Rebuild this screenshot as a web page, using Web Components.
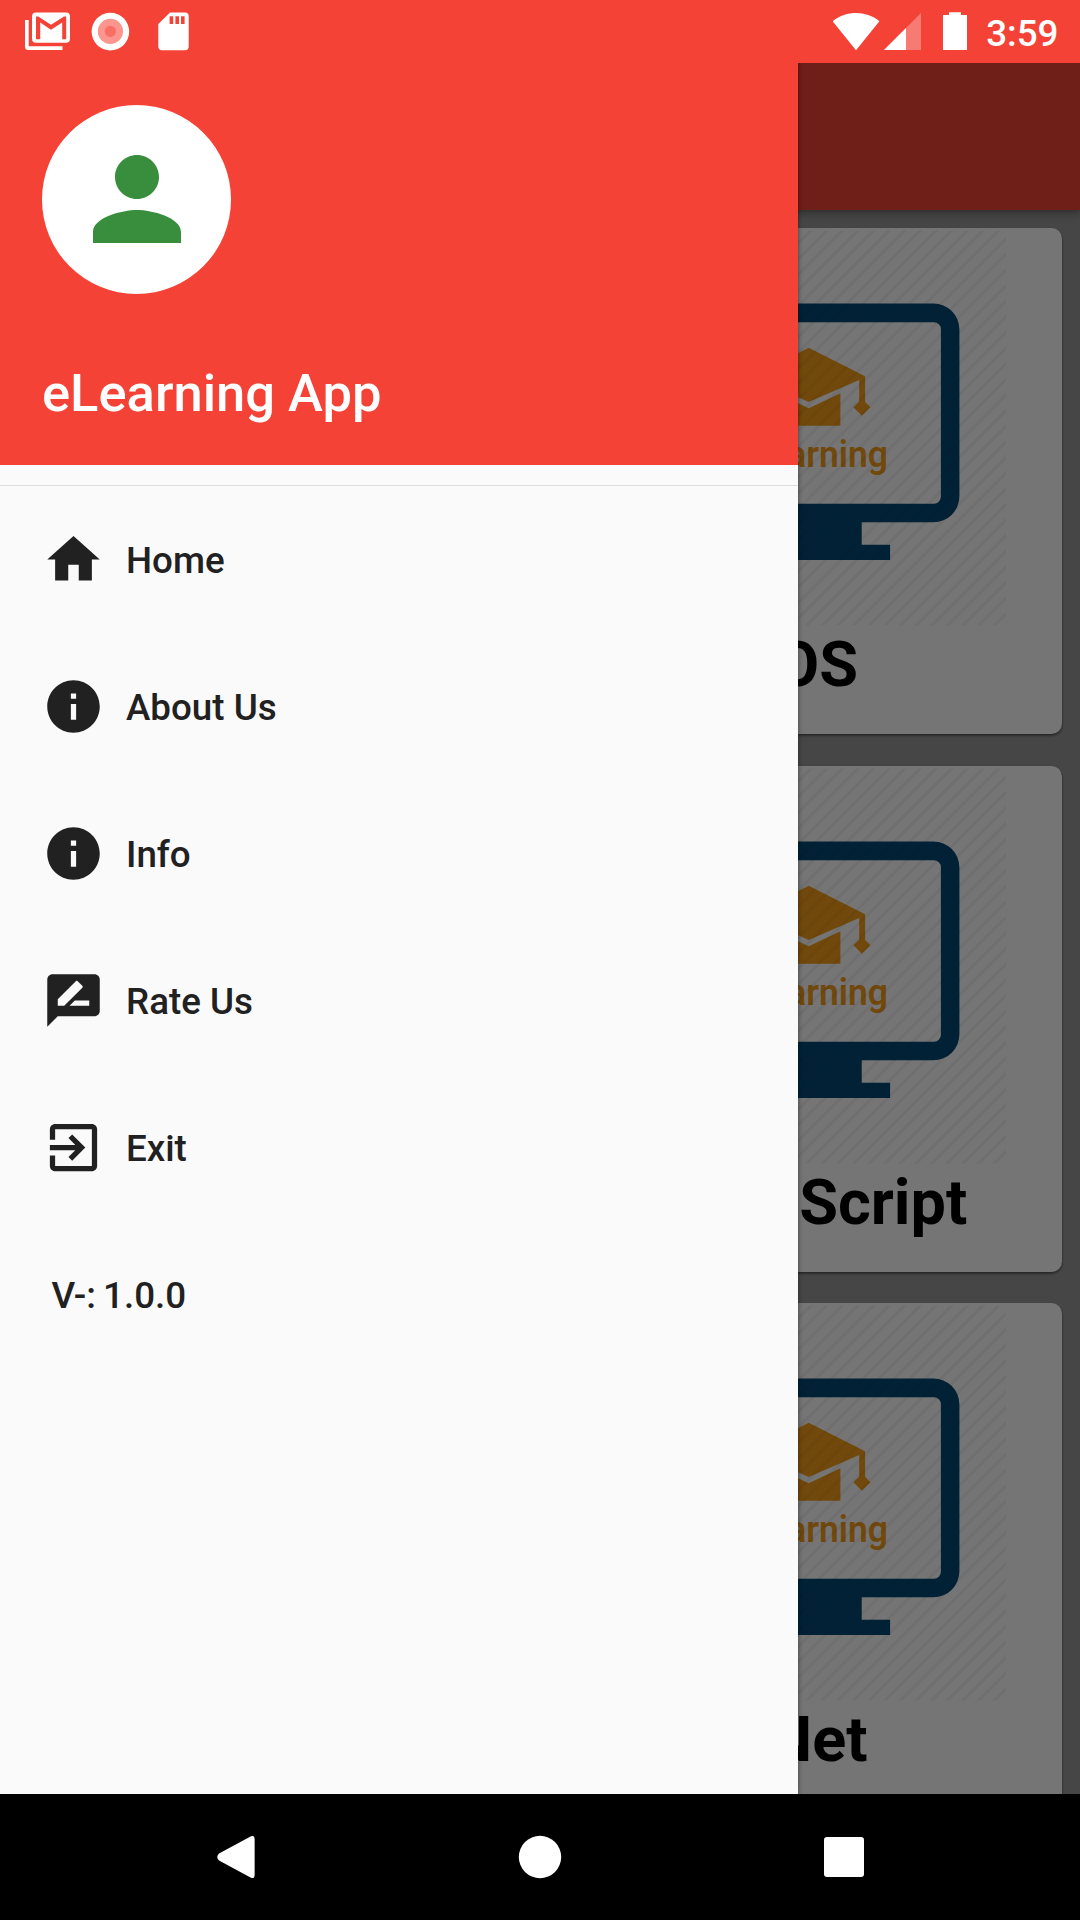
<!DOCTYPE html>
<html lang="en">
<head>
<meta charset="utf-8">
<title>eLearning App</title>
<style>
html,body{margin:0;padding:0}
body{width:1080px;height:1920px;overflow:hidden;font-family:Roboto,"Noto Sans",sans-serif;background:#000}
</style>
</head>
<body>
<phone-screen>
  <status-bar slot="status" time="3:59"></status-bar>
  <course-grid slot="page">
    <course-card>iOS</course-card>
    <course-card>Java Script</course-card>
    <course-card>.Net</course-card>
  </course-grid>
  <nav-drawer slot="drawer" heading="eLearning App">
    <drawer-item icon="home">Home</drawer-item>
    <drawer-item icon="info">About Us</drawer-item>
    <drawer-item icon="info">Info</drawer-item>
    <drawer-item icon="rate">Rate Us</drawer-item>
    <drawer-item icon="exit">Exit</drawer-item>
    <drawer-item>V-: 1.0.0</drawer-item>
  </nav-drawer>
  <system-nav slot="nav"></system-nav>
</phone-screen>
<script>
const define = (name, render) => customElements.define(name, class extends HTMLElement {
  constructor() { super(); this.attachShadow({ mode: 'open' }); }
  connectedCallback() { this.shadowRoot.innerHTML = render(this); }
});

define('phone-screen', () => `
<style>
:host{display:flex;flex-direction:column;width:1080px;height:1920px}
.stage{position:relative;flex:1;min-height:0;overflow:hidden;background:#999;display:flex;flex-direction:column}
.appbar{flex:none;height:147px;background:#f44336;box-shadow:0 5px 9px rgba(0,0,0,.2),0 2px 4px rgba(0,0,0,.15);z-index:1}
.scrim{position:absolute;inset:0;background:rgba(0,0,0,.54);z-index:2}
.drawer{position:absolute;top:0;bottom:0;left:0;width:798px;z-index:3;display:flex;box-shadow:0 0 5px rgba(0,0,0,.45)}
</style>
<slot name="status"></slot>
<div class="stage">
  <div class="appbar"></div>
  <slot name="page"></slot>
  <div class="scrim"></div>
  <div class="drawer"><slot name="drawer"></slot></div>
</div>
<slot name="nav"></slot>`);

define('status-bar', el => `
<style>
:host{display:flex;justify-content:space-between;height:63px;flex:none;background:#f44336;color:#fff;fill:#fff}
div{display:flex}
.l{padding-left:25px}.r{padding-right:21.5px}
svg{display:block;height:63px}
span{font-size:36.75px;font-weight:500;line-height:63px;margin-left:19px;padding-top:2px}
</style>
<div class="l">
<svg width="66" viewBox="25 0 66 63"><path d="M25 20h3.7v26.3H62.5V50H28.5a3.5 3.5 0 0 1-3.5-3.5z"/><path fill-rule="evenodd" d="M36 12.4h30a4 4 0 0 1 4 4v22.4a4 4 0 0 1-4 4H36a4 4 0 0 1-4-4V16.4a4 4 0 0 1 4-4zM36 39.2h4.2V22.5L51 29.8l11.2-7.3v16.7h4V16.4h-2.2L51 24.7 38.2 16.4H36z"/></svg>
<svg width="67" viewBox="91 0 67 63"><circle cx="110.4" cy="31.6" r="18.8"/><circle cx="110.4" cy="31.4" r="12.6" fill="#fb958d"/><circle cx="110.4" cy="31.3" r="5.6" fill="#f96e65"/></svg>
<svg width="31" viewBox="158 0 31 63"><path fill-rule="evenodd" d="M170 12.5h15a3.7 3.7 0 0 1 3.7 3.7v30.3a3.7 3.7 0 0 1-3.7 3.7h-23a3.7 3.7 0 0 1-3.7-3.7V24zM169.6 16.3v7.8h3.6v-7.8zM175.4 16.3v7.8h3.6v-7.8zM181 16.3v7.8h3.6v-7.8z"/></svg>
</div>
<div class="r">
<svg width="51" viewBox="833 0 51 63"><path d="M856 50.2 832.6 21.2C846 10.4 866 10.4 879.4 21.2z"/></svg>
<svg width="59" viewBox="884 0 59 63"><path opacity=".3" d="M921 13v37h-37z"/><path d="M906 28v22h-22z"/></svg>
<svg width="24" viewBox="943 0 24 63"><path d="M949 12.2h12v2.8h6v35h-24V15h6z"/></svg>
<span>${el.getAttribute('time')}</span>
</div>`);

define('course-grid', () => `
<style>
:host{display:flex;flex-direction:column;align-items:flex-end;gap:31.5px;padding:18.4px 18.4px 0 0}
</style><slot></slot>`);

let stripeId = 0;
define('course-card', () => {
  const id = 'stripe' + stripeId++;
  return `
<style>
:host{display:flex;flex-direction:column;align-items:center;flex:none;width:506px;height:506px;border-radius:10.5px;background:#fff;box-shadow:0 2px 3px rgba(0,0,0,.3),0 1px 2px rgba(0,0,0,.3)}
svg{display:block;flex:none}
p{margin:0;font-size:63px;font-weight:700;line-height:74px;color:#000;padding-top:2px;white-space:nowrap}
</style>
<svg width="398" height="398" viewBox="0 0 398 398">
<defs><pattern id="${id}" width="11.05" height="11.05" patternUnits="userSpaceOnUse" patternTransform="translate(-7.4 0) rotate(45)"><rect x="4.1" width="2.8" height="12" fill="#000" opacity=".055"/></pattern></defs>
<g transform="translate(-.6 .8)">
<path fill="#044a76" fill-rule="evenodd" d="M74 74.7H324a26 26 0 0 1 26 26V267.5a26 26 0 0 1-26 26H252.3V316H280.7V331.2H117.3V316H145.7V293.5H74a26 26 0 0 1-26-26V100.7a26 26 0 0 1 26-26zM74 93.4a7 7 0 0 0-7 7V268a7 7 0 0 0 7 7H324.5a7 7 0 0 0 7-7V100.4a7 7 0 0 0-7-7z"/>
<g fill="#f9a01b"><path d="M199.3 119 255.7 147.5V173l5.3 5.5-8.5 8.5-8.5-8.5 5.8-5.5V151.2L199.3 173.3 143 147.5z"/><path d="M168 164.5 199.3 179.5 231 164.5V197H168z"/>
<text x="199.5" y="238.600" font-size="37" font-weight="600" text-anchor="middle" textLength="158" lengthAdjust="spacingAndGlyphs">eLearning</text></g>
</g>
<rect x="2.500" y="2.500" width="393.500" height="395" fill="url(#${id})"/>
</svg>
<p><slot></slot></p>`;
});

define('nav-drawer', el => `
<style>
:host{display:flex;flex-direction:column;width:798px;background:#fafafa}
header{height:401.5px;box-sizing:border-box;padding:42px 42px 0;background:#f44336;color:#fff;flex:none}
.avatar{width:189px;height:189px;border-radius:50%;background:#fff;display:flex;align-items:center;justify-content:center}
.avatar svg{margin-bottom:2px}
h1{margin:69px 0 0;font-size:52.5px;font-weight:500;line-height:60px}
hr{margin:20px 0 0;border:0;height:1px;background:#dedede;flex:none}
</style>
<header>
<div class="avatar"><svg width="132" height="132" viewBox="0 0 24 24" fill="#388e3c"><path d="M12 12c2.21 0 4-1.79 4-4s-1.79-4-4-4-4 1.79-4 4 1.79 4 4 4zm0 2c-2.67 0-8 1.34-8 4v2h16v-2c0-2.66-5.33-4-8-4z"/></svg></div>
<h1>${el.getAttribute('heading')}</h1>
</header>
<hr>
<slot></slot>`);

const icons = {
  home: 'M10 20v-6h4v6h5v-8h3L12 3 2 12h3v8z',
  info: 'M12 2C6.48 2 2 6.48 2 12s4.48 10 10 10 10-4.48 10-10S17.52 2 12 2zm1 15h-2v-6h2v6zm0-8h-2V7h2v2z',
  rate: 'M20 2H4c-1.1 0-1.99.9-1.99 2L2 22l4-4h14c1.1 0 2-.9 2-2V4c0-1.1-.9-2-2-2zM6 14v-2.47l6.88-6.88c.2-.2.51-.2.71 0l1.77 1.77c.2.2.2.51 0 .71L8.47 14H6zm12 0h-7.5l2-2H18v2z',
  exit: 'M10.09 15.59L11.5 17l5-5-5-5-1.41 1.41L12.67 11H3v2h9.67l-2.58 2.59zM19 3H5c-1.11 0-2 .9-2 2v4h2V5h14v14H5v-4H3v4c0 1.1.89 2 2 2h14c1.1 0 2-.9 2-2V5c0-1.100-.9-2-2-2z'
};
define('drawer-item', el => {
  const icon = icons[el.getAttribute('icon')];
  return `
<style>
:host{display:flex;align-items:center;height:147px;flex:none;padding-left:${icon ? 42 : 51.5}px;gap:21px;color:#212121;fill:#212121;font-size:36.75px;font-weight:500}
svg{display:block}
span{line-height:44px;padding-top:3px;${icon ? '' : 'word-spacing:-2px'}}
</style>
${icon ? `<svg width="63" height="63" viewBox="0 0 24 24"><path d="${icon}"/></svg>` : ''}
<span><slot></slot></span>`;
});

define('system-nav', () => `
<style>
:host{display:flex;justify-content:center;align-items:center;gap:240px;height:126px;flex:none;background:#000;fill:#fff}
svg{display:block}
</style>
<svg width="64" height="64" viewBox="-32 -32 64 64"><path d="M-17-3.5 15-20.8Q18.6-22 18.6-18V18Q18.6 22 15 20.8L-17 3.5Q-20.5 0-17-3.5z"/></svg>
<svg width="64" height="64" viewBox="-32 -32 64 64"><circle r="21.2"/></svg>
<svg width="64" height="64" viewBox="-32 -32 64 64"><rect x="-20" y="-20" width="40" height="40" rx="3"/></svg>`);
</script>
</body>
</html>
